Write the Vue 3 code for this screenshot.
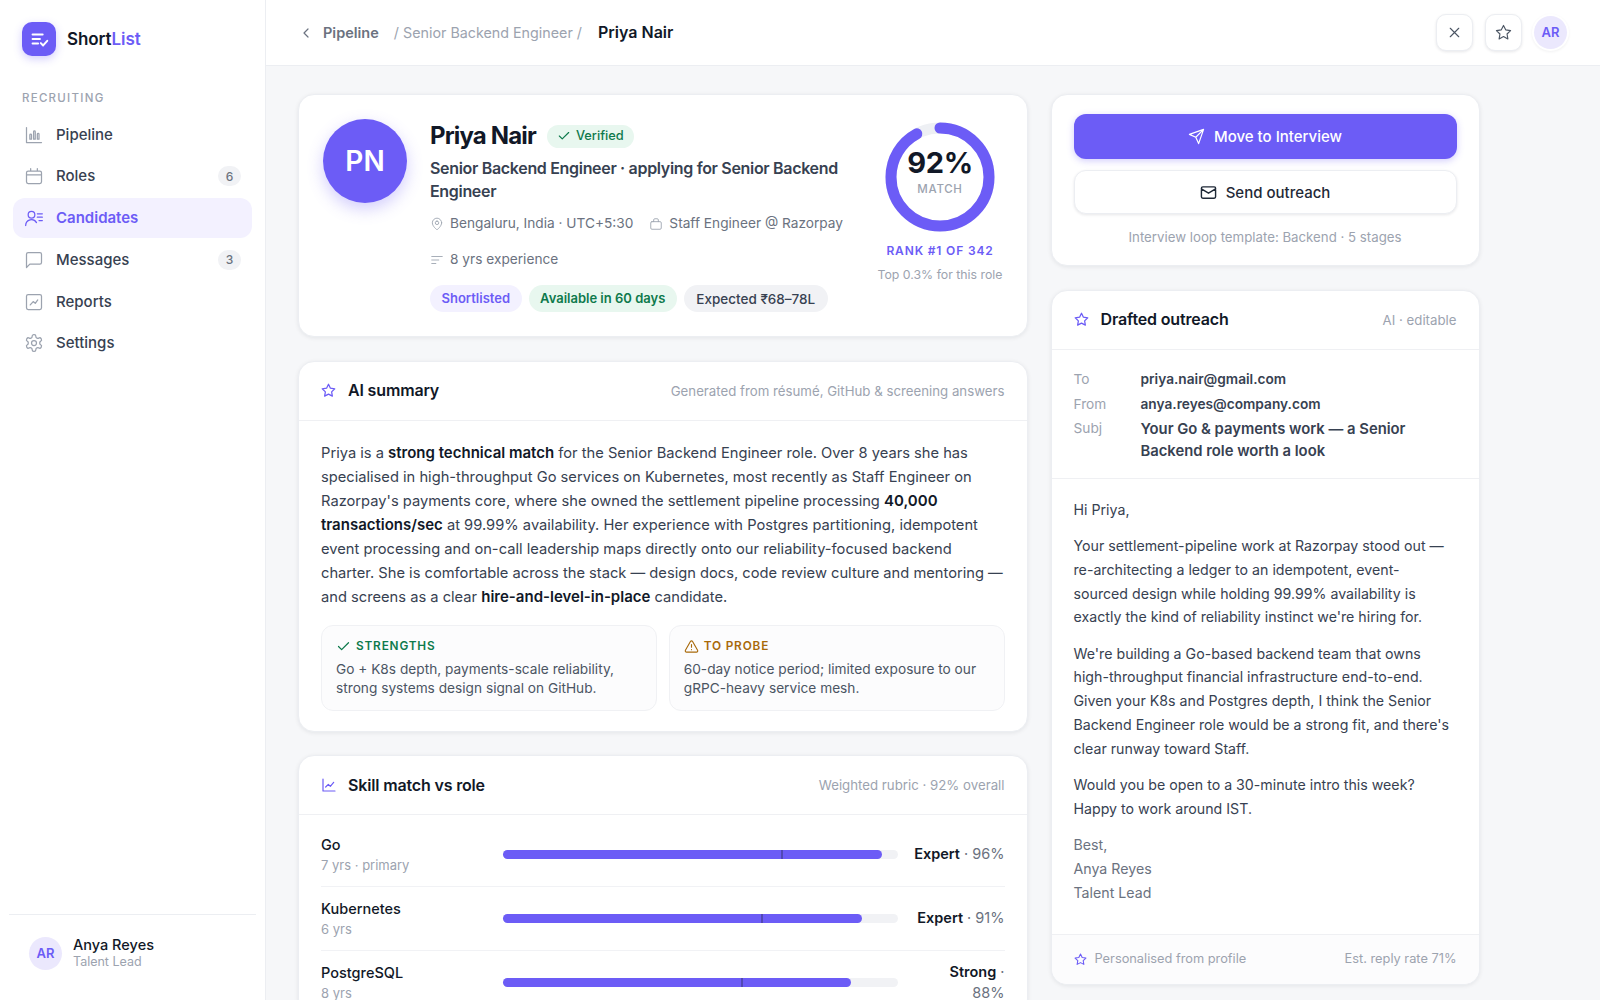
<script setup>
import { h } from 'vue'

const paths = {
  logo: 'M5 7h11M5 12h8M5 17h6M14 16.5l2.5 2.5 4.5-5',
  pipeline: 'M3 3v18h18M7 17v-5a1 1 0 0 1 2 0v5zM11.5 17V8a1 1 0 0 1 2 0v9zM16 17v-6a1 1 0 0 1 2 0v6z',
  calendar: 'M5 6h14a2 2 0 0 1 2 2v11a2 2 0 0 1-2 2H5a2 2 0 0 1-2-2V8a2 2 0 0 1 2-2zM3 10.5h18M8 3v3M16 3v3',
  candidates: 'M9 12a4 4 0 1 0 0-8 4 4 0 0 0 0 8zM2 21a7 7 0 0 1 13-3.5M16 7h6M16 11h6M18 15h4',
  messages: 'M21 15a2 2 0 0 1-2 2H7l-4 4V5a2 2 0 0 1 2-2h14a2 2 0 0 1 2 2z',
  reports: 'M5 3h14a2 2 0 0 1 2 2v14a2 2 0 0 1-2 2H5a2 2 0 0 1-2-2V5a2 2 0 0 1 2-2zM7.5 15.5l3.5-4 2.5 2 3-4',
  settings: 'M12.22 2h-.44a2 2 0 0 0-2 2v.18a2 2 0 0 1-1 1.73l-.43.25a2 2 0 0 1-2 0l-.15-.08a2 2 0 0 0-2.73.73l-.22.38a2 2 0 0 0 .73 2.73l.15.1a2 2 0 0 1 1 1.72v.51a2 2 0 0 1-1 1.74l-.15.09a2 2 0 0 0-.73 2.73l.22.38a2 2 0 0 0 2.73.73l.15-.08a2 2 0 0 1 2 0l.43.25a2 2 0 0 1 1 1.73V20a2 2 0 0 0 2 2h.44a2 2 0 0 0 2-2v-.18a2 2 0 0 1 1-1.73l.43-.25a2 2 0 0 1 2 0l.15.08a2 2 0 0 0 2.73-.73l.22-.39a2 2 0 0 0-.73-2.73l-.15-.08a2 2 0 0 1-1-1.74v-.5a2 2 0 0 1 1-1.74l.15-.09a2 2 0 0 0 .73-2.73l-.22-.38a2 2 0 0 0-2.73-.73l-.15.08a2 2 0 0 1-2 0l-.43-.25a2 2 0 0 1-1-1.73V4a2 2 0 0 0-2-2zM12 9a3 3 0 1 0 0 6 3 3 0 0 0 0-6z',
  star: 'M12 2l3.09 6.26L22 9.27l-5 4.87 1.18 6.88L12 17.77l-6.18 3.25L7 14.14 2 9.27l6.91-1.01z',
  back: 'M15 18l-6-6 6-6',
  close: 'M18 6L6 18M6 6l12 12',
  check: 'M20 6L9 17l-5-5',
  pin: 'M20 10c0 6-8 12-8 12s-8-6-8-12a8 8 0 0 1 16 0zM12 7a3 3 0 1 0 0 6 3 3 0 0 0 0-6z',
  bag: 'M5 8h14a2 2 0 0 1 2 2v9a2 2 0 0 1-2 2H5a2 2 0 0 1-2-2v-9a2 2 0 0 1 2-2zM8 8V5a2 2 0 0 1 2-2h4a2 2 0 0 1 2 2v3',
  lines: 'M3 6h18M3 12h12M3 18h7',
  send: 'M22 2L11 13M22 2l-7 20-4-9-9-4z',
  mail: 'M4 4h16a2 2 0 0 1 2 2v12a2 2 0 0 1-2 2H4a2 2 0 0 1-2-2V6a2 2 0 0 1 2-2zM22 7l-10 6L2 7',
  warn: 'M21.73 18l-8-14a2 2 0 0 0-3.46 0l-8 14A2 2 0 0 0 4 21h16a2 2 0 0 0 1.73-3zM12 9v4M12 17h.01',
  trend: 'M3 3v18h18M7 15l4-4 3 3 5-6',
}

const Icon = (props) =>
  h('svg', {
    width: props.size || 16,
    height: props.size || 16,
    viewBox: '0 0 24 24',
    fill: 'none',
    stroke: 'currentColor',
    'stroke-width': props.sw || 1.8,
    'stroke-linecap': 'round',
    'stroke-linejoin': 'round',
  }, [h('path', { d: paths[props.name] })])
Icon.props = ['name', 'size', 'sw']

const nav = [
  { label: 'Pipeline', icon: 'pipeline' },
  { label: 'Roles', icon: 'calendar', count: 6 },
  { label: 'Candidates', icon: 'candidates', active: true },
  { label: 'Messages', icon: 'messages', count: 3 },
  { label: 'Reports', icon: 'reports' },
  { label: 'Settings', icon: 'settings' },
]

const skills = [
  { name: 'Go', sub: '7 yrs · primary', level: 'Expert', pct: 96, target: 70.4 },
  { name: 'Kubernetes', sub: '6 yrs', level: 'Expert', pct: 91, target: 65.4 },
  { name: 'PostgreSQL', sub: '8 yrs', level: 'Strong', pct: 88, target: 60.2 },
]

const ringLen = 2 * Math.PI * 49
</script>

<template>
  <div class="app">
    <aside class="side">
      <div class="brand">
        <span class="logo"><Icon name="logo" :size="22" :sw="2.2" /></span>
        <span class="brand-name">Short<em>List</em></span>
      </div>
      <div class="side-label">RECRUITING</div>
      <nav class="nav">
        <a v-for="item in nav" :key="item.label" class="nav-item" :class="{ active: item.active }">
          <Icon :name="item.icon" :size="20" :sw="1.5" />
          <span class="nav-text">{{ item.label }}</span>
          <span v-if="item.count" class="count">{{ item.count }}</span>
        </a>
      </nav>
      <div class="side-user">
        <span class="avatar-sm">AR</span>
        <div>
          <div class="user-name">Anya Reyes</div>
          <div class="user-role">Talent Lead</div>
        </div>
      </div>
    </aside>

    <div class="content">
      <header class="top">
        <Icon class="crumb-back" name="back" :size="16" />
        <span class="crumb-link">Pipeline</span>
        <span class="crumb-mid">/ Senior Backend Engineer /</span>
        <span class="crumb-now">Priya Nair</span>
        <div class="top-actions">
          <button class="icon-btn"><Icon name="close" :size="17" :sw="1.6" /></button>
          <button class="icon-btn"><Icon name="star" :size="17" :sw="1.6" /></button>
          <span class="avatar-sm ringed">AR</span>
        </div>
      </header>

      <main class="page">
        <div class="col">
          <section class="card hero">
            <div class="hero-avatar">PN</div>
            <div class="hero-info">
              <div class="hero-name">
                <h1>Priya Nair</h1>
                <span class="verified"><Icon name="check" :size="14" :sw="2" />Verified</span>
              </div>
              <p class="hero-role">Senior Backend Engineer · applying for Senior Backend Engineer</p>
              <div class="hero-meta">
                <span><Icon name="pin" :size="14" :sw="1.5" />Bengaluru, India · UTC+5:30</span>
                <span><Icon name="bag" :size="14" :sw="1.5" />Staff Engineer @ Razorpay</span>
                <span><Icon name="lines" :size="14" :sw="1.5" />8 yrs experience</span>
              </div>
              <div class="chips">
                <span class="chip violet">Shortlisted</span>
                <span class="chip green">Available in 60 days</span>
                <span class="chip gray">Expected ₹68–78L</span>
              </div>
            </div>
            <div class="score">
              <div class="ring">
                <svg width="110" height="110" viewBox="0 0 110 110">
                  <circle cx="55" cy="55" r="49" fill="none" stroke="#eef0f4" stroke-width="11" />
                  <circle
                    cx="55" cy="55" r="49" fill="none" stroke="#6c5cf6" stroke-width="11" stroke-linecap="round"
                    transform="rotate(-90 55 55)" :stroke-dasharray="`${ringLen * 0.92} ${ringLen}`"
                  />
                </svg>
                <div class="ring-text">
                  <strong>92%</strong>
                  <span>MATCH</span>
                </div>
              </div>
              <div class="rank">RANK #1 OF 342</div>
              <div class="rank-sub">Top 0.3% for this role</div>
            </div>
          </section>

          <section class="card">
            <div class="card-head">
              <Icon class="accent" name="star" :size="15" :sw="2" />
              <h2>AI summary</h2>
              <span class="head-note">Generated from résumé, GitHub &amp; screening answers</span>
            </div>
            <div class="summary">
              <p>
                Priya is a <b>strong technical match</b> for the Senior Backend Engineer role. Over 8 years she has
                specialised in high-throughput Go services on Kubernetes, most recently as Staff Engineer on
                Razorpay's payments core, where she owned the settlement pipeline processing <b>40,000
                transactions/sec</b> at 99.99% availability. Her experience with Postgres partitioning, idempotent
                event processing and on-call leadership maps directly onto our reliability-focused backend
                charter. She is comfortable across the stack — design docs, code review culture and mentoring —
                and screens as a clear <b>hire-and-level-in-place</b> candidate.
              </p>
              <div class="notes">
                <div class="note">
                  <div class="note-title good"><Icon name="check" :size="15" :sw="2" />STRENGTHS</div>
                  <p>Go + K8s depth, payments-scale reliability, strong systems design signal on GitHub.</p>
                </div>
                <div class="note">
                  <div class="note-title warn"><Icon name="warn" :size="15" :sw="1.8" />TO PROBE</div>
                  <p>60-day notice period; limited exposure to our gRPC-heavy service mesh.</p>
                </div>
              </div>
            </div>
          </section>

          <section class="card">
            <div class="card-head">
              <Icon class="accent trend-icon" name="trend" :size="16" :sw="1.8" />
              <h2>Skill match vs role</h2>
              <span class="head-note">Weighted rubric · 92% overall</span>
            </div>
            <div class="skills">
              <div v-for="s in skills" :key="s.name" class="skill">
                <div class="skill-name">
                  <div>{{ s.name }}</div>
                  <small>{{ s.sub }}</small>
                </div>
                <div class="track">
                  <div class="fill" :style="{ width: s.pct + '%' }"></div>
                  <div class="target" :style="{ left: s.target + '%' }"></div>
                </div>
                <div class="skill-val"><b>{{ s.level }}</b> · {{ s.pct }}%</div>
              </div>
            </div>
          </section>
        </div>

        <div class="col">
          <section class="card actions">
            <button class="btn primary"><Icon name="send" :size="17" :sw="1.7" />Move to Interview</button>
            <button class="btn ghost"><Icon name="mail" :size="17" :sw="2" />Send outreach</button>
            <div class="actions-note">Interview loop template: Backend · 5 stages</div>
          </section>

          <section class="card">
            <div class="card-head">
              <Icon class="accent" name="star" :size="15" :sw="2" />
              <h2>Drafted outreach</h2>
              <span class="head-note">AI · editable</span>
            </div>
            <dl class="mail-meta">
              <dt>To</dt><dd>priya.nair@gmail.com</dd>
              <dt>From</dt><dd>anya.reyes@company.com</dd>
              <dt>Subj</dt><dd class="subj">Your Go &amp; payments work — a Senior Backend role worth a look</dd>
            </dl>
            <div class="mail-body">
              <p>Hi Priya,</p>
              <p>Your settlement-pipeline work at Razorpay stood out — re-architecting a ledger to an idempotent, event-sourced design while holding 99.99% availability is exactly the kind of reliability instinct we're hiring for.</p>
              <p>We're building a Go-based backend team that owns high-throughput financial infrastructure end-to-end. Given your K8s and Postgres depth, I think the Senior Backend Engineer role would be a strong fit, and there's clear runway toward Staff.</p>
              <p>Would you be open to a 30-minute intro this week? Happy to work around IST.</p>
              <p class="sign">Best,<br />Anya Reyes<br />Talent Lead</p>
            </div>
            <div class="mail-foot">
              <Icon class="accent" name="star" :size="13" :sw="2" />
              <span>Personalised from profile</span>
              <span class="foot-right">Est. reply rate 71%</span>
            </div>
          </section>
        </div>
      </main>
    </div>
  </div>
</template>

<style>
html, body { margin: 0; background: #f6f7f9; }
</style>

<style scoped>
* { box-sizing: border-box; }
.app { display: flex; height: 100vh; overflow: hidden; font-family: Inter, "Noto Sans", sans-serif; font-size: 15px; line-height: 1.45; color: #111827; background: #f6f7f9; }

.side { width: 266px; flex: none; display: flex; flex-direction: column; background: #fff; border-right: 1px solid #eceef2; }
.brand { display: flex; align-items: center; gap: 11px; padding: 22px 22px 0; }
.logo { width: 34px; height: 34px; border-radius: 10px; background: #6c5cf6; color: #fff; display: flex; align-items: center; justify-content: center; box-shadow: 0 3px 9px rgba(108, 92, 246, .3); }
.brand-name { font-size: 17px; font-weight: 600; letter-spacing: -.005em; }
.brand-name em { font-style: normal; color: #6c5cf6; }
.side-label { margin: 34px 0 8px 22px; font-size: 11.5px; font-weight: 500; letter-spacing: .11em; color: #9ca3af; }
.nav { display: flex; flex-direction: column; gap: 2px; padding: 0 13px; }
.nav-item { display: flex; align-items: center; gap: 12px; padding: 9px 11px; border-radius: 12px; color: #374151; font-weight: 500; }
.nav-item svg { color: #9ca3af; flex: none; }
.nav-item.active { background: #f3f1ff; color: #6c5cf6; font-weight: 600; }
.nav-item.active svg { color: #6c5cf6; }
.nav-text { flex: 1; }
.count { min-width: 23px; height: 20px; border-radius: 10px; background: #f1f2f5; color: #6b7280; font-size: 12px; font-weight: 500; display: flex; align-items: center; justify-content: center; }
.side-user { margin: auto 9px 0; padding: 21px 20px 30px; border-top: 1px solid #eceef2; display: flex; align-items: center; gap: 11px; }
.avatar-sm { width: 33px; height: 33px; flex: none; border-radius: 50%; background: #ebe8fd; color: #6c5cf6; font-size: 13px; font-weight: 600; display: flex; align-items: center; justify-content: center; }
.ringed { box-shadow: 0 0 0 2px #fff, 0 1px 3px 2px rgba(17, 24, 39, .06); }
.user-name { font-size: 14.5px; font-weight: 500; line-height: 1.2; }
.user-role { font-size: 12.5px; color: #9ca3af; line-height: 1.3; }

.content { flex: 1; min-width: 0; display: flex; flex-direction: column; }
.top { height: 66px; flex: none; display: flex; align-items: center; padding: 0 33px 0 32px; background: #fff; border-bottom: 1px solid #eceef2; font-size: 14.5px; }
.crumb-back { color: #6b7280; margin-right: 9px; }
.crumb-link { color: #6b7280; font-weight: 600; margin-right: 15px; }
.crumb-mid { color: #9ca3af; margin: 1px 16px 0 0; font-size: 14.3px; }
.crumb-now { font-size: 16px; font-weight: 600; }
.top-actions { margin-left: auto; display: flex; align-items: center; gap: 12px; }
.icon-btn { width: 37px; height: 37px; padding: 0; border: 1px solid #eceef2; border-radius: 10px; background: #fff; color: #4b5563; display: flex; align-items: center; justify-content: center; box-shadow: 0 1px 3px rgba(17, 24, 39, .1); }

.page { flex: 1; min-height: 0; overflow: hidden; display: grid; grid-template-columns: 729.5px 429px; gap: 23px; padding: 28px 0 0 32px; align-items: start; }
.col { display: flex; flex-direction: column; gap: 23.5px; }
.card { background: #fff; border: 1px solid #eceef2; border-radius: 16px; box-shadow: 0 1px 4px rgba(17, 24, 39, .08); overflow: hidden; }

.hero { display: flex; padding: 24px; gap: 23px; height: 243px; }
.hero-avatar { width: 84px; height: 84px; flex: none; border-radius: 50%; background: #6c5cf6; color: #fff; font-size: 28px; font-weight: 600; display: flex; align-items: center; justify-content: center; box-shadow: 0 6px 16px rgba(108, 92, 246, .3); }
.hero-info { flex: 1; min-width: 0; }
.hero-name { display: flex; align-items: center; gap: 11px; }
h1 { margin: 0; font-size: 24px; font-weight: 700; letter-spacing: -.035em; line-height: 34px; }
.verified { display: flex; align-items: center; gap: 5px; height: 23px; padding: 0 10px; border-radius: 12px; background: #e8f7ef; color: #0e7a4c; font-size: 12.8px; font-weight: 500; }
.hero-role { margin: 4px 0 0; font-size: 16px; font-weight: 600; line-height: 22.5px; color: #374151; letter-spacing: -.02em; }
.hero-meta { display: flex; flex-wrap: wrap; gap: 13px 16px; margin-top: 10px; font-size: 13.7px; color: #6b7280; line-height: 23px; }
.hero-meta span { display: flex; align-items: center; gap: 6px; }
.hero-meta svg { color: #9ca3af; }
.chips { display: flex; gap: 7px; margin-top: 14px; }
.chip { height: 27px; padding: 0 11.5px; border-radius: 14px; font-size: 13px; font-weight: 600; display: flex; align-items: center; }
.violet { background: #f3f1ff; color: #6c5cf6; }
.green { background: #e8f7ef; color: #0e7a4c; }
.gray { background: #f1f2f5; color: #374151; font-size: 13.5px; font-weight: 500; padding: 2px 12.5px 0; }

.score { flex: none; width: 125px; display: flex; flex-direction: column; align-items: center; text-align: center; margin-top: 3px; white-space: nowrap; }
.ring { position: relative; width: 110px; height: 110px; }
.ring-text { position: absolute; inset: 0; display: flex; flex-direction: column; align-items: center; justify-content: center; padding-bottom: 12px; }
.ring-text strong { font-size: 29px; font-weight: 700; line-height: 36px; letter-spacing: -.01em; }
.ring-text span { font-size: 11.5px; font-weight: 500; letter-spacing: .06em; color: #9ca3af; }
.rank { margin-top: 10px; font-size: 12px; font-weight: 600; letter-spacing: .07em; color: #6c5cf6; }
.rank-sub { margin-top: 7px; font-size: 12.3px; color: #9ca3af; }

.card-head { height: 59px; display: flex; align-items: center; gap: 12px; padding: 0 22px; border-bottom: 1px solid #eff0f3; }
.accent { color: #6c5cf6; flex: none; }
.trend-icon { margin-right: -1px; }
h2 { margin: 0; font-size: 16px; font-weight: 600; letter-spacing: -.01em; }
.head-note { margin-left: auto; margin-top: 2px; font-size: 13.25px; color: #9ca3af; }

.summary { padding: 20px 22px 20px; }
.summary > p { margin: 0; font-size: 14.7px; line-height: 24px; color: #374151; }
.summary b { font-size: 15px; font-weight: 600; color: #111827; }
.notes { display: grid; grid-template-columns: 1fr 1fr; gap: 12px; margin-top: 16px; }
.note { padding: 12px 14px 12px; border: 1px solid #f0f1f4; border-radius: 12px; background: #fcfcfd; }
.note p { margin: 5px 0 0; font-size: 13.7px; line-height: 19px; color: #4b5563; }
.note-title { display: flex; align-items: center; gap: 5px; font-size: 11.8px; font-weight: 600; letter-spacing: .07em; }
.good { color: #0e7a4c; }
.warn { color: #a8690a; }

.skills { padding: 8px 22px 0; }
.skill { display: grid; grid-template-columns: 166px 1fr 90.5px; column-gap: 16px; align-items: center; padding: 11.5px 0; border-bottom: 1px solid #f1f2f5; }
.skill:last-child { border-bottom: 0; }
.skill-name { font-size: 14.5px; font-weight: 500; line-height: 20px; }
.skill-name small { display: block; font-size: 13px; font-weight: 400; color: #9ca3af; }
.track { position: relative; height: 9px; margin-top: -1px; border-radius: 5px; background: #f1f2f5; }
.fill { height: 100%; border-radius: 5px; background: #6c5cf6; }
.target { position: absolute; top: 0; width: 2px; height: 100%; background: #3f3a8c; opacity: .6; }
.skill-val { justify-self: end; text-align: right; margin-top: -2px; font-size: 14.5px; line-height: 21px; color: #6b7280; }
.skill-val b { font-weight: 600; color: #111827; }

.actions { padding: 19px 22px 18px; }
.btn { width: 100%; display: flex; align-items: center; justify-content: center; gap: 9px; border-radius: 12px; font-family: inherit; font-size: 15px; font-weight: 500; }
.primary { height: 45px; border: 0; background: #6c5cf6; color: #fff; box-shadow: 0 2px 7px rgba(108, 92, 246, .3); }
.ghost { height: 44px; margin-top: 11px; border: 1px solid #eceef2; background: #fff; color: #1f2937; box-shadow: 0 1px 3px rgba(17, 24, 39, .1); }
.actions-note { margin-top: 14px; text-align: center; font-size: 13.25px; color: #9ca3af; }

.mail-meta { display: grid; grid-template-columns: 67px 1fr; margin: 0; padding: 17.5px 22px 16px; border-bottom: 1px solid #eff0f3; font-size: 13.7px; line-height: 24.5px; }
.mail-meta dt { color: #9ca3af; }
.mail-meta dd { margin: 0; font-weight: 600; color: #374151; }
.mail-meta .subj { font-size: 14.8px; line-height: 22px; padding-top: 2px; }
.mail-body { padding: 18.5px 26px 17px 22px; font-size: 14.2px; line-height: 23.8px; color: #374151; }
.mail-body p { margin: 0 0 12.5px; }
.sign { color: #6b7280; }
.mail-foot { height: 50px; display: flex; align-items: center; gap: 8px; padding: 0 22px; border-top: 1px solid #eff0f3; background: #fcfcfd; font-size: 12.8px; color: #9ca3af; }
.foot-right { margin-left: auto; }
</style>
